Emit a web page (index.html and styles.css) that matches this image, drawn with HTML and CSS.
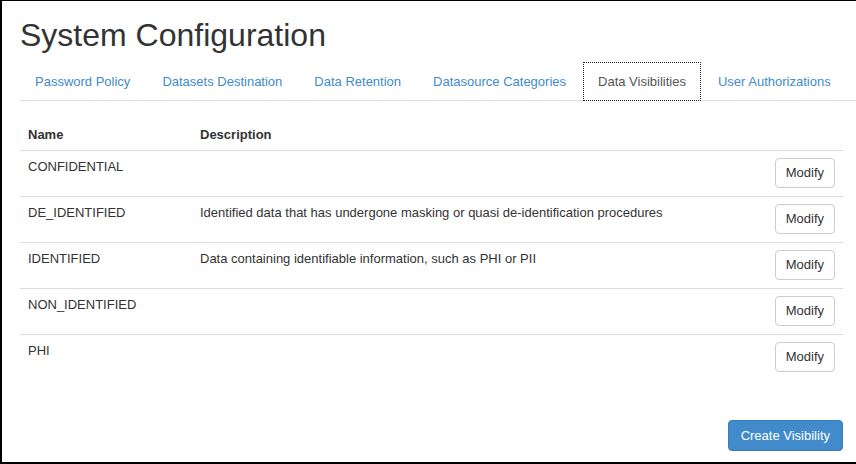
FILE: index.html
```html
<!DOCTYPE html>
<html>
<head>
<meta charset="utf-8">
<title>System Configuration</title>
<link rel="stylesheet" href="styles.css">
</head>
<body>
<div class="page">
  <h1 class="title">System Configuration</h1>
  <ul class="tabs">
    <li class="tab"><a href="#">Password Policy</a></li>
    <li class="tab"><a href="#">Datasets Destination</a></li>
    <li class="tab"><a href="#">Data Retention</a></li>
    <li class="tab"><a href="#">Datasource Categories</a></li>
    <li class="tab active"><a href="#">Data Visibilities</a></li>
    <li class="tab"><a href="#">User Authorizations</a></li>
  </ul>
  <table class="grid">
    <thead>
      <tr><th class="col-name">Name</th><th>Description</th><th></th></tr>
    </thead>
    <tbody>
      <tr><td>CONFIDENTIAL</td><td></td><td class="act"><button class="btn">Modify</button></td></tr>
      <tr><td>DE_IDENTIFIED</td><td>Identified data that has undergone masking or quasi de-identification procedures</td><td class="act"><button class="btn">Modify</button></td></tr>
      <tr><td>IDENTIFIED</td><td>Data containing identifiable information, such as PHI or PII</td><td class="act"><button class="btn">Modify</button></td></tr>
      <tr><td>NON_IDENTIFIED</td><td></td><td class="act"><button class="btn">Modify</button></td></tr>
      <tr><td>PHI</td><td></td><td class="act"><button class="btn">Modify</button></td></tr>
    </tbody>
  </table>
  <div class="footer">
    <button class="btn btn-primary">Create Visibility</button>
  </div>
</div>
</body>
</html>
```

FILE: styles.css
```css
* { box-sizing: border-box; }
html, body { margin: 0; padding: 0; background: #fff; }
body {
  font-family: "Liberation Sans", Arial, sans-serif;
  font-size: 13px;
  color: #333;
  width: 856px;
  height: 464px;
  border-top: 1px solid #000;
  border-left: 2px solid #000;
  border-bottom: 2px solid #000;
  overflow: hidden;
}
.page {
  padding: 17px 13px 0 18px;
}
.title {
  margin: 0;
  font-size: 32px;
  font-weight: 400;
  line-height: 35px;
  color: #333;
}
.tabs {
  list-style: none;
  margin: 9px -13px 0 0;
  padding: 0;
  display: flex;
  flex-wrap: nowrap;
  border-bottom: 1px solid #ddd;
}
.tab {
  flex: 0 0 auto;
  margin-right: 2px;
  margin-bottom: -1px;
  white-space: nowrap;
}
.tab a {
  display: block;
  padding: 9px 14px 9px;
  line-height: 19px;
  color: #428bca;
  text-decoration: none;
  border: 1px solid transparent;
}
.tab.active a {
  color: #555;
  background: #fff;
  border: 1px dotted #222;
}
.grid {
  width: 100%;
  margin-top: 18px;
  border-collapse: collapse;
}
.grid th {
  text-align: left;
  font-weight: 700;
  padding: 8px 8px 7px;
  line-height: 16px;
  border-bottom: 1px solid #ddd;
}
.grid th.col-name { width: 172px; }
.grid td {
  vertical-align: top;
  padding: 7px 8px 8px;
  line-height: 18px;
  border-top: 1px solid #ddd;
}
.grid tbody tr:first-child td { border-top: 0; }
.grid td.act { text-align: right; width: 80px; }
.btn {
  font-family: "Liberation Sans", Arial, sans-serif;
  font-size: 13px;
  line-height: 18px;
  padding: 5px 10px;
  height: 30px;
  color: #333;
  background: #fff;
  border: 1px solid #ccc;
  border-radius: 4px;
}
.footer {
  display: flex;
  justify-content: flex-end;
  margin-top: 40px;
}
.btn-primary {
  height: 31px;
  padding: 6px 12px;
  color: #fff;
  background: #428bca;
  border-color: #357ebd;
}
```
